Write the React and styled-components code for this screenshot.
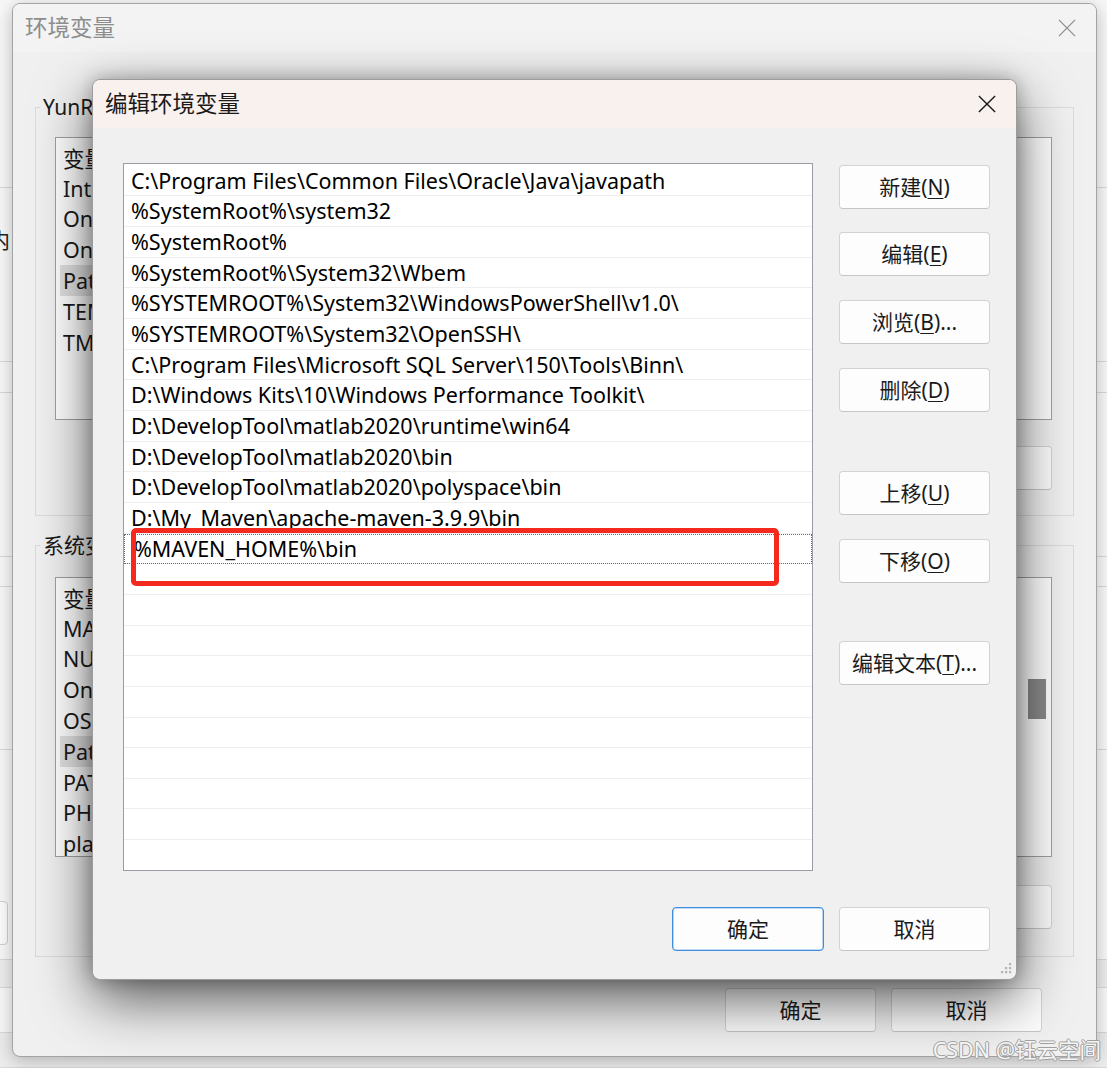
import React from "react";
import styled, { createGlobalStyle } from "styled-components";

const FONT = `"Noto Sans", "Noto Sans CJK SC", sans-serif`;

const GlobalStyle = createGlobalStyle`
  html, body { margin: 0; padding: 0; }
  body { background: #f5f5f5; font-family: ${FONT}; color: #1a1a1a; }
  * { box-sizing: border-box; }
`;

const Desktop = styled.div`
  position: relative;
  width: 1107px;
  height: 1068px;
  overflow: hidden;
  background: #f7f7f7;
  font-family: ${FONT};
`;

/* ---------- background application (peeking around the windows) ---------- */
const BgRows = styled.div`
  display: flex;
  flex-direction: column;
`;
const BgRow = styled.div`
  height: ${(p) => p.$h}px;
  flex: none;
  border-bottom: 1px solid #d9d9d9;
  background: ${(p) => (p.$shade ? "#ededed" : "#f8f8f8")};
  font-size: 21px;
  overflow: hidden;
`;
const BgGlyph = styled.span`
  display: block;
  margin: 37px 0 0 -11px;
  line-height: 30px;
  color: #222;
`;
const BgButton = styled.div`
  margin: 151px 0 0 -12px;
  width: 20px;
  height: 44px;
  border: 1px solid #cfcfcf;
  border-radius: 4px;
  background: #fcfcfc;
`;

/* ---------- outer window ---------- */
const OuterWindow = styled.div`
  position: absolute;
  left: 12px;
  top: 3px;
  width: 1085px;
  height: 1054px;
  border: 1px solid #a3a3a3;
  border-radius: 8px;
  background: #f0f0f0;
  box-shadow: 0 4px 18px rgba(0, 0, 0, 0.25);
  overflow: hidden;
  display: flex;
  flex-direction: column;
`;
const TitleBar = styled.div`
  height: 48px;
  flex: none;
  display: flex;
  align-items: center;
  justify-content: space-between;
  padding-left: 12px;
  background: ${(p) => (p.$active ? "#f9f1ee" : "#f3f3f3")};
`;
const TitleText = styled.span`
  font-size: 22.5px;
  line-height: 30px;
  color: ${(p) => (p.$active ? "#1a1a1a" : "#8d8d8d")};
`;
const CloseButton = styled.div`
  width: 58px;
  height: 100%;
  display: flex;
  align-items: center;
  justify-content: center;
`;
const OuterBody = styled.div`
  flex: 1;
  display: flex;
  flex-direction: column;
  padding: 0 22px;
`;
const GroupBox = styled.div`
  margin-top: ${(p) => p.$top}px;
  border: 1px solid #dadada;
  padding: 0 21px ${(p) => p.$bottom}px 19px;
  display: flex;
  flex-direction: column;
`;
const Legend = styled.span`
  display: block;
  width: fit-content;
  margin: -16px 0 0 -15px;
  padding: 0 3px;
  background: #f0f0f0;
  font-size: 21px;
  line-height: 30px;
  white-space: nowrap;
`;
const ListView = styled.div`
  margin-top: ${(p) => p.$top}px;
  height: ${(p) => p.$h}px;
  background: #fff;
  border: 1px solid #9f9fa7;
  display: flex;
  overflow: hidden;
`;
const ListColumn = styled.div`
  flex: 1;
  padding: 4px 0 0 4px;
  overflow: hidden;
`;
const ListRow = styled.div`
  height: 30.8px;
  display: flex;
  align-items: stretch;
  font-size: 21.5px;
  white-space: nowrap;
`;
const NameCell = styled.span`
  width: 260px;
  flex: none;
  display: flex;
  align-items: center;
  padding-left: 3px;
  background: ${(p) => (p.$selected ? "#e2e2e2" : "transparent")};
  overflow: hidden;
`;
const ScrollTrack = styled.div`
  width: 24px;
  flex: none;
  padding: 101px 5px 0 0;
  display: flex;
  justify-content: flex-end;
`;
const ScrollThumb = styled.div`
  width: 18px;
  height: 40px;
  background: #8a8a8a;
`;
const ButtonRow = styled.div`
  margin-top: ${(p) => p.$top}px;
  padding-right: ${(p) => p.$right || 0}px;
  display: flex;
  justify-content: flex-end;
  gap: 15px;
`;

/* ---------- shared button ---------- */
const Button = styled.div`
  width: ${(p) => p.$w || 151}px;
  height: 44px;
  flex: none;
  margin-top: ${(p) => p.$mt || 0}px;
  display: flex;
  align-items: center;
  justify-content: center;
  background: #fdfdfd;
  border: 1px solid ${(p) => (p.$default ? "#3d8ee0" : "#d3d3d3")};
  border-bottom-color: ${(p) => (p.$default ? "#3d8ee0" : "#c6c6c6")};
  box-shadow: ${(p) => (p.$default ? "inset 0 0 0 0.6px rgba(61,142,224,0.6)" : "none")};
  border-radius: 4px;
  font-size: 21px;
  line-height: 1;
  color: #1b1b1b;
  white-space: nowrap;
`;
const Mn = styled.u`
  text-decoration-thickness: 1px;
  text-underline-offset: 3px;
`;

/* ---------- edit dialog ---------- */
const Dialog = styled.div`
  position: absolute;
  left: 92px;
  top: 79px;
  width: 925px;
  height: 901px;
  border: 1px solid #9c9c9c;
  border-radius: 8px;
  background: #f0f0f0;
  overflow: hidden;
  box-shadow: 0 20px 56px rgba(0, 0, 0, 0.62), 0 0 18px rgba(0, 0, 0, 0.26);
  display: flex;
  flex-direction: column;
`;
const DialogBody = styled.div`
  flex: 1;
  display: grid;
  grid-template-columns: 690px 151px;
  grid-template-rows: 708px auto;
  column-gap: 26px;
  padding: 35px 26px 0 30px;
`;
const PathList = styled.div`
  position: relative;
  height: 708px;
  background: #fff;
  border: 1px solid #9b9ba3;
  padding-top: 1.7px;
  overflow: hidden;
`;
const PathRow = styled.div`
  height: 30.67px;
  border-bottom: 1px solid #efefef;
  padding-left: ${(p) => (p.$editing ? 10 : 7)}px;
  font-size: 21.5px;
  line-height: 29.67px;
  white-space: nowrap;
  color: #000;
  outline: ${(p) => (p.$focused ? "1px dotted #6a6a6a" : "none")};
  outline-offset: -1px;
`;
const RedMark = styled.div`
  position: absolute;
  left: 7px;
  top: 364px;
  width: 648px;
  height: 58px;
  border: 5px solid #f52a1f;
  border-radius: 5px;
  pointer-events: none;
`;
const SideButtons = styled.div`
  display: flex;
  flex-direction: column;
  padding-top: 2px;
`;
const Footer = styled.div`
  grid-column: 1 / -1;
  margin-top: 36px;
  display: flex;
  justify-content: flex-end;
  gap: 15px;
`;
const Grip = styled.svg`
  position: absolute;
  right: 4px;
  bottom: 3px;
`;
const Watermark = styled.div`
  position: absolute;
  right: 6px;
  bottom: 5px;
  font-size: 21.5px;
  line-height: 26px;
  color: rgba(250, 250, 250, 0.95);
  text-shadow: 1px 0 0 #a0a0a0, -1px 0 0 #a0a0a0, 0 1px 0 #a0a0a0, 0 -1px 0 #a0a0a0;
  white-space: nowrap;
`;

const XIcon = ({ color, size, w }) => (
  <svg width={size} height={size} viewBox="0 0 20 20">
    <path d="M1 1 L19 19 M19 1 L1 19" stroke={color} strokeWidth={w} fill="none" />
  </svg>
);

const paths = [
  "C:\\Program Files\\Common Files\\Oracle\\Java\\javapath",
  "%SystemRoot%\\system32",
  "%SystemRoot%",
  "%SystemRoot%\\System32\\Wbem",
  "%SYSTEMROOT%\\System32\\WindowsPowerShell\\v1.0\\",
  "%SYSTEMROOT%\\System32\\OpenSSH\\",
  "C:\\Program Files\\Microsoft SQL Server\\150\\Tools\\Binn\\",
  "D:\\Windows Kits\\10\\Windows Performance Toolkit\\",
  "D:\\DevelopTool\\matlab2020\\runtime\\win64",
  "D:\\DevelopTool\\matlab2020\\bin",
  "D:\\DevelopTool\\matlab2020\\polyspace\\bin",
  "D:\\My_Maven\\apache-maven-3.9.9\\bin",
  "%MAVEN_HOME%\\bin",
];
const TOTAL_ROWS = 23;

const userVars = ["IntelliJ IDEA", "OneDrive", "OneDriveConsumer", "Path", "TEMP", "TMP"];
const sysVars = ["MAVEN_HOME", "NUMBER_OF_PROCESSORS", "OnlineServices", "OS", "Path", "PATHEXT", "PHP_HOME", "platformcode"];

const VarList = ({ rows, h, top, scroll }) => (
  <ListView $h={h} $top={top}>
    <ListColumn>
      <ListRow>
        <NameCell>变量</NameCell>
      </ListRow>
      {rows.map((k) => (
        <ListRow key={k}>
          <NameCell $selected={k === "Path"}>{k}</NameCell>
        </ListRow>
      ))}
    </ListColumn>
    {scroll && (
      <ScrollTrack>
        <ScrollThumb />
      </ScrollTrack>
    )}
  </ListView>
);

export default function App() {
  const rows = Array.from({ length: TOTAL_ROWS }, (_, i) => paths[i] || "");
  return (
    <Desktop>
      <GlobalStyle />
      <BgRows>
        <BgRow $h={188} />
        <BgRow $h={174}>
          <BgGlyph>内</BgGlyph>
        </BgRow>
        <BgRow $h={31} />
        <BgRow $h={164} />
        <BgRow $h={30} />
        <BgRow $h={163} />
        <BgRow $h={210}>
          <BgButton />
        </BgRow>
        <BgRow $h={28} $shade />
        <BgRow $h={45} />
        <BgRow $h={35} $shade />
      </BgRows>

      <OuterWindow>
        <TitleBar>
          <TitleText>环境变量</TitleText>
          <CloseButton>
            <XIcon color="#8f8f8f" size={18} w={1.4} />
          </CloseButton>
        </TitleBar>
        <OuterBody>
          <GroupBox $top={55} $bottom={25}>
            <Legend>YunRuan 的用户变量(U)</Legend>
            <VarList rows={userVars} h={283} top={15} />
            <ButtonRow $top={26}>
              <Button>新建(<Mn>N</Mn>)...</Button>
              <Button>编辑(<Mn>E</Mn>)...</Button>
              <Button>删除(<Mn>D</Mn>)</Button>
            </ButtonRow>
          </GroupBox>
          <GroupBox $top={29} $bottom={27}>
            <Legend>系统变量(S)</Legend>
            <VarList rows={sysVars} h={280} top={17} scroll />
            <ButtonRow $top={28}>
              <Button>新建(<Mn>W</Mn>)...</Button>
              <Button>编辑(<Mn>I</Mn>)...</Button>
              <Button>删除(<Mn>L</Mn>)</Button>
            </ButtonRow>
          </GroupBox>
          <ButtonRow $top={31} $right={32}>
            <Button>确定</Button>
            <Button>取消</Button>
          </ButtonRow>
        </OuterBody>
      </OuterWindow>

      <Dialog>
        <TitleBar $active>
          <TitleText $active>编辑环境变量</TitleText>
          <CloseButton>
            <XIcon color="#1a1a1a" size={18} w={1.6} />
          </CloseButton>
        </TitleBar>
        <DialogBody>
          <PathList>
            {rows.map((t, i) => (
              <PathRow key={i} $focused={i === 12} $editing={i === 12}>
                {t}
              </PathRow>
            ))}
            <RedMark />
          </PathList>
          <SideButtons>
            <Button>新建(<Mn>N</Mn>)</Button>
            <Button $mt={23}>编辑(<Mn>E</Mn>)</Button>
            <Button $mt={24}>浏览(<Mn>B</Mn>)...</Button>
            <Button $mt={24}>删除(<Mn>D</Mn>)</Button>
            <Button $mt={59}>上移(<Mn>U</Mn>)</Button>
            <Button $mt={24}>下移(<Mn>O</Mn>)</Button>
            <Button $mt={58}>编辑文本(<Mn>T</Mn>)...</Button>
          </SideButtons>
          <Footer>
            <Button $w={152} $default>确定</Button>
            <Button>取消</Button>
          </Footer>
        </DialogBody>
        <Grip width="14" height="14" viewBox="0 0 14 14">
          {[
            [11, 1],
            [7, 5],
            [11, 5],
            [3, 9],
            [7, 9],
            [11, 9],
          ].map(([x, y]) => (
            <rect key={`${x}-${y}`} x={x} y={y} width="2.2" height="2.2" fill="#b4b4b4" />
          ))}
        </Grip>
      </Dialog>

      <Watermark>CSDN @钰云空间</Watermark>
    </Desktop>
  );
}
